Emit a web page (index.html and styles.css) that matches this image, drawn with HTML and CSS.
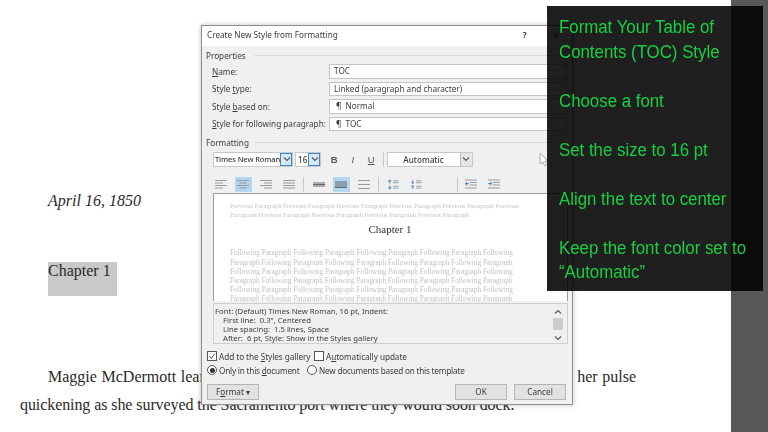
FILE: index.html
```html
<!DOCTYPE html>
<html lang="en">
<head>
<meta charset="utf-8">
<title>Create New Style from Formatting</title>
<link rel="stylesheet" href="styles.css">
</head>
<body>
<svg class="defs" width="0" height="0" aria-hidden="true">
  <defs>
    <symbol id="al" viewBox="0 0 12 10"><path d="M0 1h12M0 3.500h8M0 6h12M0 8.500h8"/></symbol>
    <symbol id="ac" viewBox="0 0 12 10"><path d="M0 1h12M2 3.500h8M0 6h12M2 8.500h8"/></symbol>
    <symbol id="ar" viewBox="0 0 12 10"><path d="M0 1h12M4 3.500h8M0 6h12M4 8.500h8"/></symbol>
    <symbol id="aj" viewBox="0 0 12 10"><path d="M0 1h12M0 3.500h12M0 6h12M0 8.500h12"/></symbol>
    <symbol id="ls1" viewBox="0 0 12 10"><path d="M0 3.500h12M0 5h12M0 6.500h12"/></symbol>
    <symbol id="ls2" viewBox="0 0 12 10"><path d="M0 2.500h12M0 4.500h12M0 6.500h12M0 8h12"/></symbol>
    <symbol id="ls3" viewBox="0 0 12 10"><path d="M0 1h12M0 5h12M0 9h12"/></symbol>
    <symbol id="sp1" viewBox="0 0 12 12"><path class="blue" d="M2.500 1v4M1 3l1.500-2L4 3M2.500 7v4M1 9l1.500 2L4 9"/><path d="M6 2h6M6 4h6M6 8h6M6 10h6"/></symbol>
    <symbol id="sp2" viewBox="0 0 12 12"><path class="blue" d="M2.500 1v4M1 3.500L2.500 5 4 3.500M2.500 7v4M1 8.500L2.500 7 4 8.500"/><path d="M6 2h6M6 4h6M6 8h6M6 10h6"/></symbol>
    <symbol id="in1" viewBox="0 0 12 10"><path d="M0 .500h12M5 3h7M5 5.500h7M0 8.500h12"/><path class="blue" d="M4 4.200H0M2 2.500L.2 4.200 2 6"/></symbol>
    <symbol id="in2" viewBox="0 0 12 10"><path d="M0 .500h12M5 3h7M5 5.500h7M0 8.500h12"/><path class="blue" d="M0 4.200h4M2.200 2.500L4 4.200 2.200 6"/></symbol>
    <symbol id="chev" viewBox="0 0 8 6"><path d="M1 1.500L4 4.500 7 1.500"/></symbol>
  </defs>
</svg>

<div class="page">
  <main class="doc">
    <p class="date">April 16, 1850</p>
    <p class="chapter">Chapter 1</p>
    <p class="line first">Maggie McDermott leaned against the railing of the steamer and gripped it tight, her pulse</p>
    <p class="line second">quickening as she surveyed the Sacramento port where they would soon dock.</p>
  </main>
  <div class="rail"></div>
</div>

<section class="dialog">
  <header class="titlebar">
    <span class="title">Create New Style from Formatting</span>
    <span class="help">?</span>
    <span class="close">×</span>
  </header>
  <div class="body">
    <div class="group-label">Properties</div>
    <div class="props">
      <label><u>N</u>ame:</label><div class="field">TOC</div>
      <label>Style <u>t</u>ype:</label><div class="field">Linked (paragraph and character)</div>
      <label>Style <u>b</u>ased on:</label><div class="field pil">¶ Normal</div>
      <label><u>S</u>tyle for following paragraph:</label><div class="field pil">¶ TOC</div>
    </div>
    <div class="group-label fmt">Formatting</div>
    <div class="toolbar">
      <div class="combo font"><span class="val">Times New Roman</span><span class="drop on"><svg class="chev"><use href="#chev"/></svg></span></div>
      <div class="combo size"><span class="val">16</span><span class="drop on"><svg class="chev"><use href="#chev"/></svg></span></div>
      <b class="tb b">B</b><i class="tb i">I</i><u class="tb u">U</u>
      <span class="vsep"></span>
      <div class="combo color"><span class="val mid">Automatic</span><span class="drop"><svg class="chev"><use href="#chev"/></svg></span></div>
    </div>
    <div class="iconbar">
      <span class="ib"><svg><use href="#al"/></svg></span>
      <span class="ib on"><svg><use href="#ac"/></svg></span>
      <span class="ib"><svg><use href="#ar"/></svg></span>
      <span class="ib"><svg><use href="#aj"/></svg></span>
      <span class="vsep first-sep"></span>
      <span class="ib"><svg class="dark"><use href="#ls1"/></svg></span>
      <span class="ib on"><svg class="dark"><use href="#ls2"/></svg></span>
      <span class="ib"><svg><use href="#ls3"/></svg></span>
      <span class="vsep"></span>
      <span class="ib"><svg><use href="#sp1"/></svg></span>
      <span class="ib"><svg><use href="#sp2"/></svg></span>
      <span class="vsep wide"></span>
      <span class="ib"><svg><use href="#in1"/></svg></span>
      <span class="ib"><svg><use href="#in2"/></svg></span>
    </div>
    <div class="preview">
      <p class="ghost prev">Previous Paragraph Previous Paragraph Previous Paragraph Previous Paragraph Previous Paragraph Previous Paragraph Previous Paragraph Previous Paragraph Previous Paragraph Previous Paragraph</p>
      <p class="sample">Chapter 1</p>
      <p class="ghost next">Following Paragraph Following Paragraph Following Paragraph Following Paragraph Following Paragraph Following Paragraph Following Paragraph Following Paragraph Following Paragraph Following Paragraph Following Paragraph Following Paragraph Following Paragraph Following Paragraph Following Paragraph Following Paragraph Following Paragraph Following Paragraph Following Paragraph Following Paragraph Following Paragraph Following Paragraph Following Paragraph Following Paragraph Following Paragraph Following Paragraph Following Paragraph Following Paragraph Following Paragraph Following Paragraph</p>
    </div>
    <div class="desc">
      <div class="desc-text">
        <div>Font: (Default) Times New Roman, 16 pt, Indent:</div>
        <div class="ind">First line:&nbsp; 0.3", Centered</div>
        <div class="ind">Line spacing:&nbsp; 1.5 lines, Space</div>
        <div class="ind">After:&nbsp; 6 pt, Style: Show in the Styles gallery</div>
      </div>
      <div class="scroll">
        <svg class="chev up"><use href="#chev"/></svg>
        <span class="thumb"></span>
        <svg class="chev"><use href="#chev"/></svg>
      </div>
    </div>
    <div class="opts">
      <span class="opt opt-a"><span class="check"><svg viewBox="0 0 10 10"><path d="M1.500 5l2.500 3 4.500-6"/></svg></span><span>Add to the <u>S</u>tyles gallery</span></span>
      <span class="opt"><span class="check"></span><span>A<u>u</u>tomatically update</span></span>
    </div>
    <div class="opts radios">
      <span class="opt opt-b"><span class="radio sel"></span><span>Only in this <u>d</u>ocument</span></span>
      <span class="opt"><span class="radio"></span><span>New documents based on this template</span></span>
    </div>
    <div class="buttons">
      <span class="btn fmtbtn"><span>F<u>o</u>rmat ▾</span></span>
      <span class="spacer"></span>
      <span class="btn">OK</span>
      <span class="btn">Cancel</span>
    </div>
  </div>
</section>

<svg class="cursor" viewBox="0 0 10 15"><path d="M1 1v11l2.800-2.400L5.500 14l2-.9-1.700-4H9z"/></svg>

<aside class="panel">
  <div class="panel-text">
    <p>Format Your Table of<br>Contents (TOC) Style</p>
    <p>Choose a font</p>
    <p>Set the size to 16 pt</p>
    <p>Align the text to center</p>
    <p>Keep the font color set to<br>“Automatic”</p>
  </div>
</aside>
</body>
</html>
```
FILE: styles.css
```css
* { box-sizing: border-box; }
html, body { margin: 0; padding: 0; }
body {
  width: 768px; height: 432px; overflow: hidden; background: #fff;
  position: relative; font-family: "Liberation Serif", serif; color: #222;
}
p { margin: 0; }
.defs { position: absolute; }

.page { display: flex; width: 768px; height: 432px; }
.doc { flex: 1; padding: 191px 95px 0 20px; font-size: 16px; line-height: 20px; color: #2a2a2a; }
.rail { width: 37px; background: #585858; }
.date { margin-left: 28px; font-style: italic; }
.chapter {
  margin: 51px 0 0 28px; width: 69px; height: 34px; background: #c9c9c9;
  line-height: 18px; font-size: 16px;
}
.line { white-space: nowrap; }
.first { margin: 71px 0 0 28px; text-align: justify; text-align-last: justify; white-space: normal; width: 588px; }
.second { margin-top: 8px; letter-spacing: -.08px; }

.dialog {
  position: absolute; left: 201px; top: 25px; width: 372px; height: 380px;
  background: #f0f0f0; border: 1px solid #8f8f8f;
  box-shadow: 0 0 5px rgba(0,0,0,.25);
  font-family: "Noto Sans", sans-serif; font-size: 8.200px; color: #3c3c3c;
  filter: blur(.25px);
}
.titlebar {
  height: 20px; background: #fff; display: flex; align-items: center;
  padding: 0 12px 3px 5px;
}
.title { flex: 1; }
.help { margin-right: 26px; font-weight: 700; }
.close { font-size: 13px; }
.body { padding: 3px 5px 0 4px; }
.group-label { position: relative; line-height: 13px; height: 13px; overflow: hidden; }
.group-label::after {
  content: ""; position: absolute; left: 48px; right: 0; top: 6px; height: 1px; background: #dcdcdc;
}
.props {
  display: grid; grid-template-columns: 117px 1fr; row-gap: 3px; padding: 0 0 0 6px; margin-top: 2px;
  align-items: center;
}
.props label { white-space: nowrap; }
.field {
  height: 14.500px; background: #fff; border: 1px solid #c4c4c4; padding: 0 4px;
  line-height: 12px; white-space: nowrap;
}
.pil { padding-left: 6px; word-spacing: 2px; }
.fmt { margin-top: 5px; }
.toolbar { display: flex; align-items: center; height: 16px; margin: 2px 0 0 7px; }
.combo { display: flex; height: 15px; background: #fff; border: 1px solid #c8c8c8; }
.val { flex: 1; padding-left: 2px; line-height: 13px; white-space: nowrap; overflow: hidden; font-weight: 500; }
.font .val { font-size: 7.500px; padding-left: 1px; letter-spacing: -.1px; }
.mid { text-align: center; padding: 0; }
.drop {
  width: 12px; flex: none; background: #e6e6e6; border-left: 1px solid #bbb;
  display: flex; align-items: center; justify-content: center;
}
.drop.on { background: #d5e8f6; outline: 1px solid #3f87c0; outline-offset: -1px; }
.chev { width: 8px; height: 6px; fill: none; stroke: #555; stroke-width: 1.100; }
.font { width: 80px; }
.size { width: 26px; margin-left: 2px; }
.tb { width: 18.500px; text-align: center; font-family: "Liberation Sans", sans-serif; color: #555; font-size: 9.500px; }
.b { margin-left: 4px; }
.color { width: 86px; margin-left: 3px; }
.vsep { width: 1px; height: 15px; background: #c8c8c8; margin: 0 3px; }
.toolbar .vsep { margin: 0 0 0 2px; }
.iconbar { display: flex; align-items: center; height: 16px; margin: 9px 0 0 6px; }
.ib { width: 17px; height: 15px; margin-right: 5.700px; display: flex; align-items: center; justify-content: center; }
.ib.on { background: #b5d6f0; }
.ib svg { width: 12px; height: 11px; fill: none; stroke: #9a9a9a; stroke-width: 1; }
.ib svg.dark { stroke: #666; }
.blue { stroke: #3c82bd; }
.iconbar .vsep { margin: 0 5px 0 0; }
.iconbar .vsep.first-sep { margin-right: 6.500px; }
.iconbar .vsep.wide { margin-left: 27px; margin-right: 5px; }

.preview {
  margin: 1px 0 0 7px; width: 355px; height: 108px; background: #fff; overflow: hidden;
  border: 1px solid #9c9c9c; border-bottom: 0; padding: 7px 37px 0 16px;
  font-family: "Liberation Serif", serif; color: #c2c2c2;
}
.ghost { line-height: 9.200px; }
.prev { font-size: 6.600px; }
.next { font-size: 7.300px; margin: 12px 8px 0 0; }
.sample { text-align: center; font-size: 11px; line-height: 14px; color: #333; margin: 3px -20px 0 0; font-weight: 500; }
.desc {
  margin: 2px 0 0 7px; width: 355px; height: 41px; border: 1px solid #cfcfcf; display: flex;
  padding: 3px 3px 0 1px; line-height: 8.900px; font-size: 7.700px;
}
.desc-text { flex: 1; }
.ind { padding-left: 8px; }
.scroll { width: 13px; display: flex; flex-direction: column; align-items: center; padding-top: 2px; }
.up { transform: rotate(180deg); }
.thumb { width: 10px; height: 12px; background: #cdcdcd; margin: 3px 0 5px; }
.opts { display: flex; align-items: center; margin: 6px 0 0 1px; height: 12px; letter-spacing: -.05px; }
.radios { margin-top: 2px; letter-spacing: -.2px; }
.opt { display: flex; align-items: center; gap: 2px; white-space: nowrap; }
.opt-a { width: 107px; }
.opt-b { width: 100px; }
.check { width: 10px; height: 10px; border: 1px solid #555; background: #fff; display: block; }
.check svg { display: block; width: 8px; height: 8px; fill: none; stroke: #444; stroke-width: 1.200; }
.radio { width: 10px; height: 10px; border: 1px solid #555; border-radius: 50%; background: #fff; position: relative; }
.radio.sel::after { content: ""; position: absolute; inset: 1.500px; border-radius: 50%; background: #333; }
.buttons { display: flex; gap: 7px; margin: 8px 0 0 1px; padding-right: 1px; }
.btn {
  width: 52px; height: 16px; background: #e2e2e2; border: 1px solid #b4b4b4; text-align: center; line-height: 14px;
}
.spacer { flex: 1; }

.cursor {
  position: absolute; left: 539px; top: 152px; width: 10px; height: 15px;
  fill: #fff; stroke: #aaa; stroke-width: 1;
}
.panel {
  position: absolute; left: 547px; top: 6px; width: 216px; height: 285px;
  background: rgba(0,0,0,.88); padding: 9px 8px 0 12px;
  font-family: "Liberation Sans", Arial, sans-serif; font-size: 18px; line-height: 24.500px; color: #16cf42;
}
.panel-text { transform: scaleX(.935); transform-origin: left top; }
.panel p { margin-bottom: 24.500px; white-space: nowrap; }
```
